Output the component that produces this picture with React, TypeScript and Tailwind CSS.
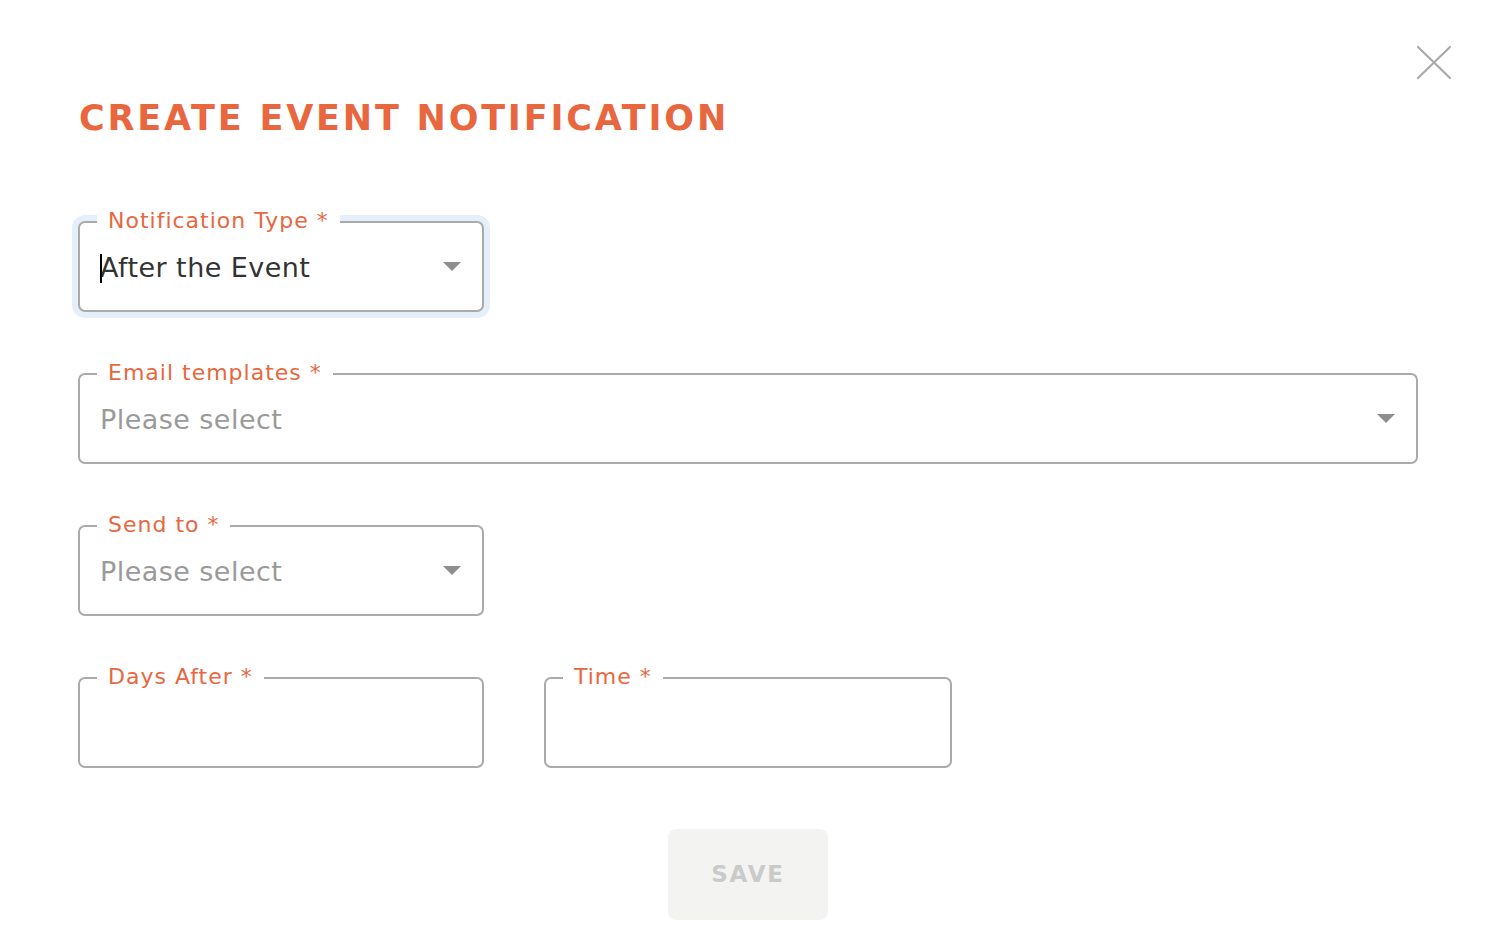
import React from "react";

const font = { fontFamily: '"DejaVu Sans", "Noto Sans", sans-serif' };

function Arrow() {
  return (
    <svg width="18" height="10" viewBox="0 0 18 10" className="shrink-0">
      <path d="M0 0 L18 0 L9 9 Z" fill="#8e8e8e" />
    </svg>
  );
}

function Field({
  label,
  width,
  value,
  placeholder,
  select,
  focused,
}: {
  label: string;
  width: string;
  value?: string;
  placeholder?: string;
  select?: boolean;
  focused?: boolean;
}) {
  return (
    <div
      className={`relative h-[91px] ${width} rounded-[7px] border-2 border-[#a9abab] bg-white ${
        focused ? "ring-[6px] ring-[#e5eefb]" : ""
      }`}
    >
      <span className="absolute -top-[16px] left-[17px] bg-white px-[11px] text-[22px] leading-[28px] tracking-[1px] text-[#e8673f]">
        {label}
      </span>
      <div className="flex h-full items-center pl-[20px] pr-[21px]">
        <div className="flex-1 pt-[2px] text-[27px] leading-[34px] tracking-[0.45px]">
          {value ? (
            <span className="relative text-[#333333]">
              <span className="absolute left-0 top-[2px] h-[29px] w-[2px] bg-black" />
              {value}
            </span>
          ) : (
            <span className="text-[#9a9a9a]">{placeholder}</span>
          )}
        </div>
        {select && <Arrow />}
      </div>
    </div>
  );
}

export default function App() {
  return (
    <div className="relative min-h-[926px] w-full bg-white" style={font}>
      <button className="absolute right-[40px] top-[45px] p-0">
        <svg width="36" height="35" viewBox="0 0 36 35">
          <path d="M2 2 L34 33 M34 2 L2 33" stroke="#a7aba7" strokeWidth="2.2" strokeLinecap="round" />
        </svg>
      </button>
      <div className="px-[78px] pt-[97px]">
        <h1 className="ml-[1px] text-[35px] font-bold leading-[42px] tracking-[0.08em] text-[#e8673f]">
          CREATE EVENT NOTIFICATION
        </h1>
        <div className="mt-[82px] flex flex-col gap-[61px]">
          <Field label="Notification Type *" width="w-[406px]" value="After the Event" select focused />
          <Field label="Email templates *" width="w-[1340px]" placeholder="Please select" select />
          <Field label="Send to *" width="w-[406px]" placeholder="Please select" select />
          <div className="flex gap-[60px]">
            <Field label="Days After *" width="w-[406px]" />
            <Field label="Time *" width="w-[408px]" />
          </div>
        </div>
        <div className="mt-[61px] flex w-[1340px] justify-center">
          <button className="h-[91px] w-[160px] rounded-[8px] bg-[#f3f3f2] text-[23px] font-bold tracking-[0.08em] text-[#cacaca]">
            SAVE
          </button>
        </div>
      </div>
    </div>
  );
}
